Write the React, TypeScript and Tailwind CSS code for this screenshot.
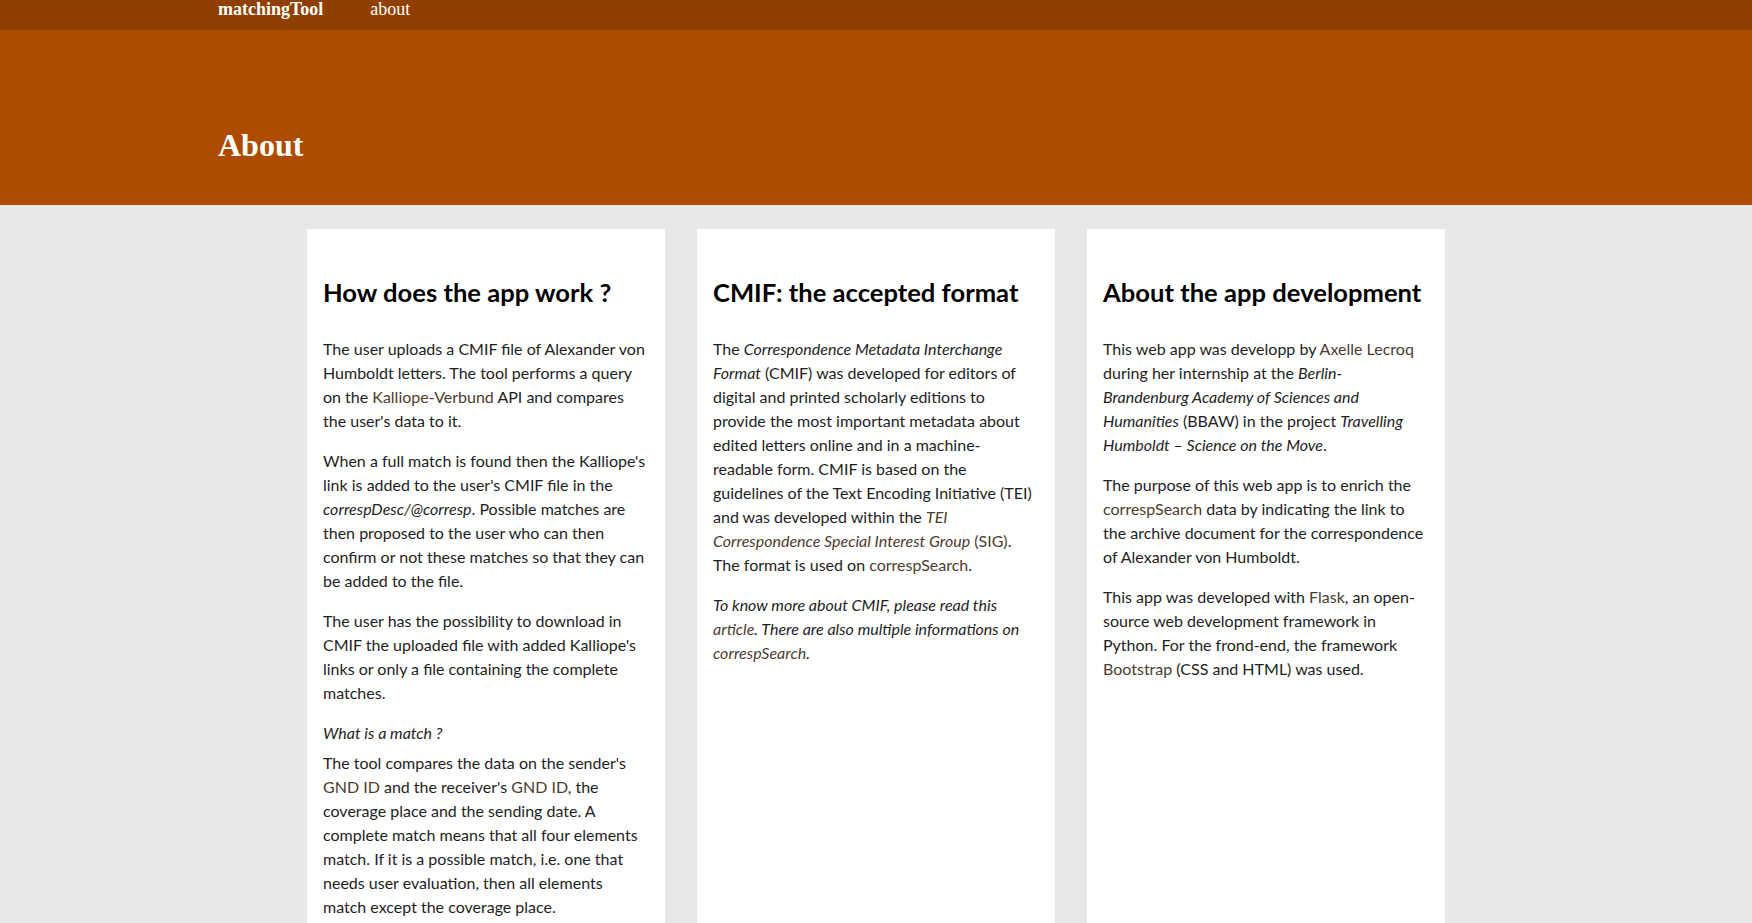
import React from "react";

const serif = "font-['Liberation_Serif','Times_New_Roman',serif]";
const sans = "font-['Lato','Liberation_Sans',sans-serif]";

function A({ children }: { children: React.ReactNode }) {
  return <a className="text-[#4d3c2f] no-underline">{children}</a>;
}

function Card({ title, children }: { title: string; children: React.ReactNode }) {
  return (
    <div className="bg-white px-4 pt-4 pb-10">
      <h2 className="mt-[32px] mb-[29px] text-[25.6px] font-bold leading-[1.2] text-black">{title}</h2>
      <div className="text-base leading-6 text-[#1e1e1e]">{children}</div>
    </div>
  );
}

export default function App() {
  return (
    <div className={`min-h-screen bg-[#e8e8e8] ${sans}`}>
      <nav className="h-[30px] bg-[#8f4000]">
        <div className={`mx-auto flex w-[1316px] items-start gap-[47px] text-[18px] leading-[18px] text-white ${serif}`}>
          <a className="font-bold">matchingTool</a>
          <a>about</a>
        </div>
      </nav>
      <header className="h-[175px] bg-[#ad4c00] pt-[99px]">
        <div className="mx-auto w-[1316px]">
          <h1 className={`text-[32px] font-bold leading-[32px] text-white ${serif}`}>About</h1>
        </div>
      </header>
      <main className="mx-auto mt-6 grid w-[1138px] grid-cols-3 gap-8 pb-8">
        <Card title="How does the app work ?">
          <p className="mb-4">
            The user uploads a CMIF file of Alexander von Humboldt letters. The tool performs a query on the{" "}
            <A>Kalliope-Verbund</A> API and compares the user's data to it.
          </p>
          <p className="mb-4">
            When a full match is found then the Kalliope's link is added to the user's CMIF file in the{" "}
            <em>correspDesc/@corresp</em>. Possible matches are then proposed to the user who can then confirm or not
            these matches so that they can be added to the file.
          </p>
          <p className="mb-4">
            The user has the possibility to download in CMIF the uploaded file with added Kalliope's links or only a
            file containing the complete matches.
          </p>
          <p className="mb-[6px] italic">What is a match ?</p>
          <p className="mb-4">
            The tool compares the data on the sender's <A>GND ID</A> and the receiver's <A>GND ID</A>, the coverage
            place and the sending date. A complete match means that all four elements match. If it is a possible
            match, i.e. one that needs user evaluation, then all elements match except the coverage place.
          </p>
        </Card>
        <Card title="CMIF: the accepted format">
          <p className="mb-4">
            The <em>Correspondence Metadata Interchange Format</em> (CMIF) was developed for editors of digital and
            printed scholarly editions to provide the most important metadata about edited letters online and in a
            machine-readable form. CMIF is based on the guidelines of the Text Encoding Initiative (TEI) and was
            developed within the <A><em>TEI Correspondence Special Interest Group</em> (SIG)</A>. The format is used
            on <A>correspSearch</A>.
          </p>
          <p className="mb-4 italic">
            To know more about CMIF, please read this <A>article</A>. There are also multiple informations on{" "}
            <A>correspSearch</A>.
          </p>
        </Card>
        <Card title="About the app development">
          <p className="mb-4">
            This web app was developp by <A>Axelle Lecroq</A> during her internship at the{" "}
            <em>
              Berlin-
              <br />
              Brandenburg Academy of Sciences and Humanities
            </em>{" "}
            (BBAW) in the project <em>Travelling Humboldt – Science on the Move</em>.
          </p>
          <p className="mb-4">
            The purpose of this web app is to enrich the <A>correspSearch</A> data by indicating the link to the
            archive document for the correspondence of Alexander von Humboldt.
          </p>
          <p className="mb-4">
            This app was developed with <A>Flask</A>, an open-source web development framework in Python. For the
            frond-end, the framework <A>Bootstrap</A> (CSS and HTML) was used.
          </p>
        </Card>
      </main>
    </div>
  );
}
